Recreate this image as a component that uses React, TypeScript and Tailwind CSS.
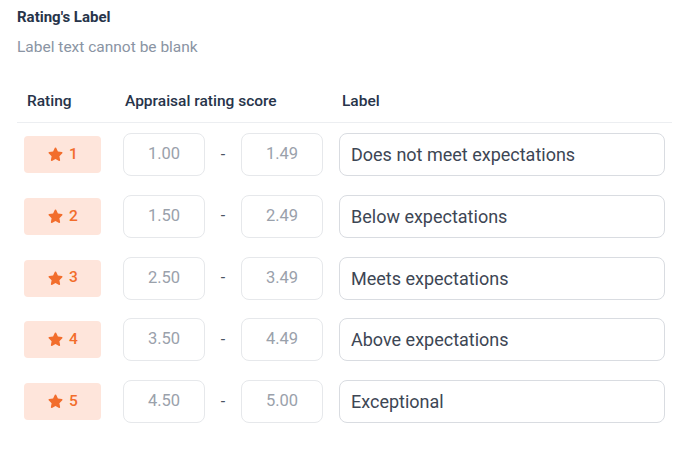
const ratings = [
  { star: 1, min: "1.00", max: "1.49", label: "Does not meet expectations" },
  { star: 2, min: "1.50", max: "2.49", label: "Below expectations" },
  { star: 3, min: "2.50", max: "3.49", label: "Meets expectations" },
  { star: 4, min: "3.50", max: "4.49", label: "Above expectations" },
  { star: 5, min: "4.50", max: "5.00", label: "Exceptional" },
];

function Star() {
  return (
    <svg width="17" height="17" viewBox="0 0 24 24" fill="currentColor">
      <path d="M11.1 2.6a1 1 0 0 1 1.8 0l2.5 5.2 5.6.8a1 1 0 0 1 .6 1.7l-4.1 4 1 5.6a1 1 0 0 1-1.5 1.1L12 18.3 7 21a1 1 0 0 1-1.5-1.1l1-5.6-4.1-4a1 1 0 0 1 .6-1.7l5.6-.8z" />
    </svg>
  );
}

export default function App() {
  return (
    <div className="w-[688px] h-[453px] bg-white px-[17px] pt-[8px] font-['Roboto',sans-serif]">
      {/* Title */}
      <h2 className="text-[15px] leading-[18px] font-bold text-[#27344a]">Rating's Label</h2>
      <p className="mt-[11px] text-[15.5px] leading-[20px] text-[#8a94a3]">Label text cannot be blank</p>

      {/* Table header */}
      <div className="mt-[25px] flex pt-[10px] pb-[12px] leading-[18px] border-b border-[#eceef1] text-[15.5px] font-medium text-[#27344a] w-[655px]">
        <div className="pl-[10px] w-[108px]">Rating</div>
        <div className="w-[217px]">Appraisal rating score</div>
        <div>Label</div>
      </div>

      {/* Rows */}
      <div className="pl-[7px] pt-[10px] flex flex-col gap-[18.75px]">
        {ratings.map((r) => (
          <div key={r.star} className="flex items-center h-[43px]">
            <div className="w-[77px] h-[37px] rounded-[4px] bg-[#fee5db] text-[#f26d2c] flex items-center justify-center gap-[5px] text-[15.5px] font-medium">
              <Star />
              <span>{r.star}</span>
            </div>
            <div className="ml-[22px] w-[82px] h-[43px] rounded-[8px] border border-[#e6e8eb] flex items-center justify-center text-[16.5px] text-[#9aa1ab]">
              {r.min}
            </div>
            <div className="w-[36px] text-center text-[16px] text-[#4b5563]">-</div>
            <div className="w-[82px] h-[43px] rounded-[8px] border border-[#e6e8eb] flex items-center justify-center text-[16.5px] text-[#9aa1ab]">
              {r.max}
            </div>
            <div className="ml-[16px] w-[326px] h-[43px] rounded-[8px] border border-[#d9dce1] flex items-center px-[11px] text-[18px] text-[#3d4654]">
              {r.label}
            </div>
          </div>
        ))}
      </div>
    </div>
  );
}
